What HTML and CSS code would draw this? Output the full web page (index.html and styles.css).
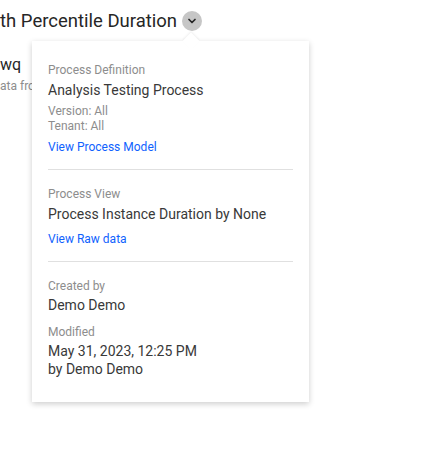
FILE: index.html
```html
<!DOCTYPE html>
<html>
<head>
<meta charset="utf-8">
<link rel="stylesheet" href="styles.css">
</head>
<body>
<div class="page">
  <div class="header">
    <h1 class="title">th Percentile Duration</h1>
    <button class="toggle" aria-label="Details">
      <svg width="10" height="10" viewBox="0 0 10 10"><path d="M2 3.5 L5 6.5 L8 3.5" fill="none" stroke="#262626" stroke-width="1.7" stroke-linecap="round" stroke-linejoin="round"/></svg>
    </button>
  </div>
  <div class="body-text">
    <div class="name">wq</div>
    <div class="desc">ata from</div>
  </div>

  <div class="popover">
    <span class="arrow"></span>
    <section class="section first">
      <div class="label">Process Definition</div>
      <div class="value">Analysis Testing Process</div>
      <div class="meta">Version: All</div>
      <div class="meta">Tenant: All</div>
      <a class="link" href="#">View Process Model</a>
    </section>
    <section class="section">
      <div class="label">Process View</div>
      <div class="value">Process Instance Duration by None</div>
      <a class="link" href="#">View Raw data</a>
    </section>
    <section class="section last">
      <div class="label">Created by</div>
      <div class="value">Demo Demo</div>
      <div class="label spaced">Modified</div>
      <div class="value">May 31, 2023, 12:25 PM<br>by Demo Demo</div>
    </section>
  </div>
</div>
</body>
</html>
```

FILE: styles.css
```css
* { box-sizing: border-box; }
html, body { margin: 0; padding: 0; background: #fff; }
body {
  font-family: Roboto, "Noto Sans", "Liberation Sans", sans-serif;
  color: #393939;
  width: 429px;
  height: 453px;
  overflow: hidden;
}
.page { position: relative; height: 100%; }
.header {
  display: flex;
  align-items: center;
  gap: 5px;
  height: 42px;
}
.title {
  margin: 0;
  font-size: 18.5px;
  font-weight: 400;
  color: #262626;
  line-height: 42px;
}
.toggle {
  width: 20px;
  height: 20px;
  border-radius: 50%;
  border: none;
  background: #c6c6c6;
  padding: 0;
  display: flex;
  align-items: center;
  justify-content: center;
}
.body-text { padding-top: 12px; }
.name { font-size: 16px; color: #262626; line-height: 22px; }
.desc { font-size: 12px; color: #8d8d8d; line-height: 20px; }

.popover {
  position: absolute;
  left: 32px;
  top: 41px;
  width: 277px;
  background: #fff;
  padding: 0 16px;
  box-shadow: 0 2px 6px rgba(0,0,0,0.2);
}
.arrow {
  position: absolute;
  left: 153px;
  top: -6px;
  width: 12px;
  height: 12px;
  background: #fff;
  transform: rotate(45deg);
  box-shadow: -1px -1px 2px rgba(0,0,0,0.06);
}
.section {
  position: relative;
  padding: 16px 0 14px;
  border-bottom: 1px solid #e0e0e0;
}
.section.first { padding-top: 21px; }
.section.last { border-bottom: none; padding-bottom: 24px; }
.label { font-size: 12px; color: #8d8d8d; line-height: 16px; }
.value { font-size: 14px; color: #393939; line-height: 18px; margin-top: 3px; }
.meta { font-size: 12px; color: #8d8d8d; line-height: 15px; }
.value + .meta { margin-top: 5px; }
.link {
  display: block;
  font-size: 12px;
  color: #0f62fe;
  text-decoration: none;
  line-height: 16px;
  margin-top: 5px;
}
.value + .link { margin-top: 8px; }
.last .value { margin-top: 2px; }
.label.spaced { margin-top: 10px; }
```
